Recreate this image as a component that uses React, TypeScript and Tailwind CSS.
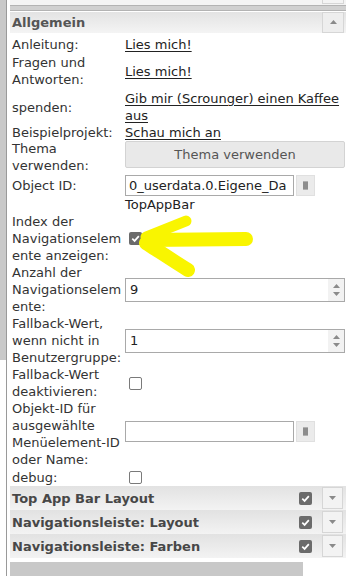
import React from 'react';

const Check = ({ on }: { on?: boolean }) =>
  on ? (
    <span className="inline-flex w-[13px] h-[13px] rounded-[2px] bg-[#6b6b6b] items-center justify-center">
      <svg width="9" height="9" viewBox="0 0 10 10">
        <path d="M1.4 5.2 L4 7.7 L8.7 2.3" fill="none" stroke="#fff" strokeWidth="1.9" />
      </svg>
    </span>
  ) : (
    <span className="inline-block w-[13px] h-[13px] rounded-[2px] border border-[#7a7a7a] bg-white" />
  );

const Caret = ({ up }: { up?: boolean }) => (
  <svg width="7" height="4" viewBox="0 0 7 4">
    <path d={up ? 'M0 4 L3.5 0 L7 4 Z' : 'M0 0 L3.5 4 L7 0 Z'} fill="#8a8a8a" />
  </svg>
);

// small "select object" button next to the id inputs
const PickerBtn = () => (
  <div className="w-[19px] h-[21px] ml-[2px] bg-[#ebebeb] border border-[#e0e0e0] flex items-center justify-center">
    <span className="w-[5px] h-[9px] bg-[#8d8d8d] border-y border-[#b0b0b0]" />
  </div>
);

const Row = ({ label, children, className = '' }: { label: React.ReactNode; children?: React.ReactNode; className?: string }) => (
  <div className={`flex ${className.includes('items-start') ? '' : 'items-center'} ${className}`}>
    <div className="w-[115px] shrink-0 pl-[2px] whitespace-nowrap">{label}</div>
    <div className="flex-1 min-w-0">{children}</div>
  </div>
);

const Link = ({ children }: { children: React.ReactNode }) => (
  <span className="underline text-[#222] underline-offset-2">{children}</span>
);

const NumberInput = ({ value }: { value: string }) => (
  <div className="h-[24px] mr-[1px] border border-[#a9a9a9] bg-white flex items-stretch">
    <span className="flex-1 pl-[4px] flex items-center text-[#222]">{value}</span>
    <div className="w-[16px] bg-[#f2f2f2] flex flex-col items-center justify-center gap-[4px]">
      <Caret up />
      <Caret />
    </div>
  </div>
);

const Section = ({ title }: { title: string }) => (
  <div className="h-[24px] flex items-center bg-linear-to-b from-[#e2e2e2] to-[#f3f3f3]">
    <span className="flex-1 pl-[2px] font-bold text-[#474747]">{title}</span>
    <Check on />
    <div className="ml-[10px] mr-[3px] w-[21px] h-[22px] border border-[#d6d6d6] bg-[#f3f3f3] flex items-center justify-center">
      <Caret />
    </div>
  </div>
);

export default function App() {
  return (
    <div className="relative w-[346px] h-[576px] overflow-hidden bg-white flex font-['DejaVu_Sans',Verdana,sans-serif] text-[13px] leading-[17px] text-[#333]">
      <div className="w-[7px] shrink-0 border-r border-[#9a9a9a]">
        <div className="h-[360px] bg-[#c9c9c9]" />
      </div>
      <div className="flex-1 flex flex-col pl-[3px]">
        <div className="h-[12px] flex flex-col">
          <div className="h-[5px] flex justify-end bg-[#f4f4f4] pr-[2px]">
            <div className="w-[22px] h-[4px] border-x border-b border-[#d6d6d6]" />
          </div>
          <div className="h-[6px] bg-[#d0d0d0] border-y border-[#b3b3b3]" />
        </div>

        <div className="h-[22px] flex items-center bg-linear-to-b from-[#e3e3e3] to-[#f4f4f4]">
          <span className="flex-1 pl-[2px] font-bold text-[#555]">Allgemein</span>
          <div className="mr-[2px] w-[22px] h-[21px] border border-[#d6d6d6] bg-[#eeeeee] flex items-center justify-center">
            <Caret up />
          </div>
        </div>

        <Row label="Anleitung:" className="mt-[3px]">
          <Link>Lies mich!</Link>
        </Row>
        <Row label={<>Fragen und<br />Antworten:</>} className="mt-[1px]">
          <Link>Lies mich!</Link>
        </Row>
        <Row label="spenden:" className="mt-[2px]">
          <Link>Gib mir (Scrounger) einen Kaffee aus</Link>
        </Row>
        <Row label="Beispielprojekt:">
          <Link>Schau mich an</Link>
        </Row>
        <Row label={<>Thema<br />verwenden:</>} className="items-start -mt-[1px]">
          <div className="mt-[1px] h-[27px] mr-[1px] bg-[#e9e9e9] border border-[#d3d3d3] rounded-[2px] flex items-center justify-center text-[#555]">
            Thema verwenden
          </div>
        </Row>
        <Row label="Object ID:" className="h-[22px] mt-[1px]">
          <div className="flex items-center">
            <div className="w-[169px] h-[21px] border border-[#a9a9a9] bg-white flex items-center pl-[3px] overflow-hidden whitespace-nowrap text-[#222]">
              0_userdata.0.Eigene_Da
            </div>
            <PickerBtn />
          </div>
        </Row>
        <Row label="">
          <span className="text-[#222]">TopAppBar</span>
        </Row>
        <Row label={<>Index der<br />Navigationselem<br />ente anzeigen:</>}>
          <div className="pl-[4px] flex"><Check on /></div>
        </Row>
        <Row label={<>Anzahl der<br />Navigationselem<br />ente:</>}>
          <NumberInput value="9" />
        </Row>
        <Row label={<>Fallback-Wert,<br />wenn nicht in<br />Benutzergruppe:</>}>
          <NumberInput value="1" />
        </Row>
        <Row label={<>Fallback-Wert<br />deaktivieren:</>}>
          <div className="pl-[4px] flex"><Check /></div>
        </Row>
        <Row label={<>Objekt-ID für<br />ausgewählte<br />Menüelement-ID<br />oder Name:</>}>
          <div className="flex items-center -mt-[5px]">
            <div className="w-[169px] h-[21px] border border-[#a9a9a9] bg-white" />
            <PickerBtn />
          </div>
        </Row>
        <Row label="debug:" className="mt-[1px]">
          <div className="pl-[4px] flex"><Check /></div>
        </Row>

        <div className="flex flex-col">
          <Section title="Top App Bar Layout" />
          <Section title="Navigationsleiste: Layout" />
          <Section title="Navigationsleiste: Farben" />
        </div>
        <div className="mt-[4px] w-[293px] h-[14px] bg-[#c8c8c8]" />
      </div>

      <svg className="absolute left-0 top-0 pointer-events-none" width="346" height="576" viewBox="0 0 346 576">
        <g fill="none" stroke="#f9f500" strokeLinecap="round" strokeLinejoin="round">
          <path d="M148 240 L246 239" strokeWidth="14" />
          <path d="M146 237 L186 221" strokeWidth="11" />
          <path d="M146 243 C160 252 175 262 188 270" strokeWidth="14" />
        </g>
      </svg>
    </div>
  );
}
